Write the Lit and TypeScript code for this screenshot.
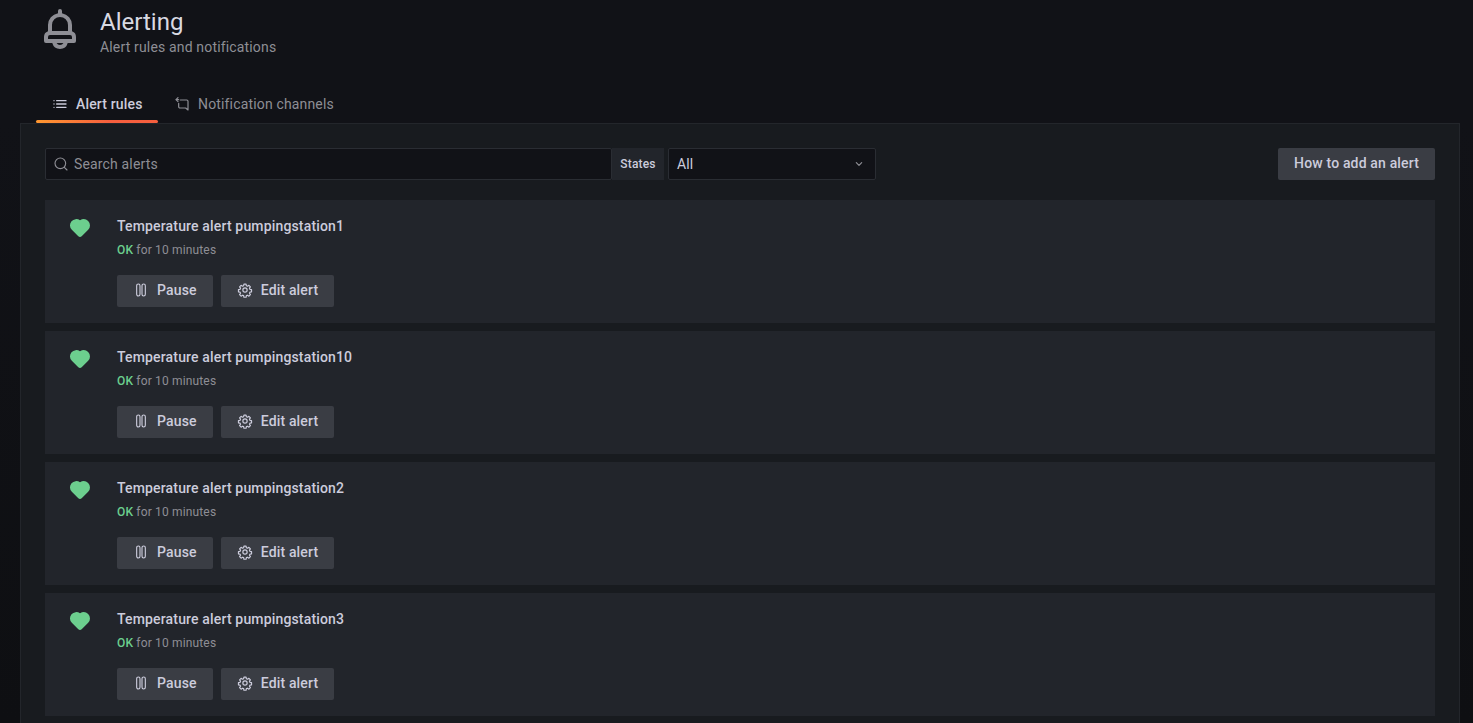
import { LitElement, html, css, svg } from "lit";
import { customElement } from "lit/decorators.js";

const bell = svg`<path fill="currentColor" d="M18,13.18V10a6,6,0,0,0-5-5.91V3a1,1,0,0,0-2,0V4.09A6,6,0,0,0,6,10v3.18A3,3,0,0,0,4,16v2a1,1,0,0,0,1,1H8.14a4,4,0,0,0,7.72,0H19a1,1,0,0,0,1-1V16A3,3,0,0,0,18,13.18ZM8,10a4,4,0,0,1,8,0v3H8Zm4,10a2,2,0,0,1-1.72-1h3.44A2,2,0,0,1,12,20Zm6-3H6V16a1,1,0,0,1,1-1H17a1,1,0,0,1,1,1Z"/>`;
const heart = svg`<path fill="currentColor" d="M20.16 5A6.29 6.29 0 0 0 12 4.36a6.27 6.27 0 0 0-8.16 9.48l6.21 6.22a2.78 2.78 0 0 0 3.9 0l6.21-6.22a6.27 6.27 0 0 0 0-8.84Z"/>`;
const list = svg`<g fill="none" stroke="currentColor" stroke-width="2" stroke-linecap="round"><path d="M7 7h14M7 12h14M7 17h14M3 7h.01M3 12h.01M3 17h.01"/></g>`;
const share = svg`<g fill="none" stroke="currentColor" stroke-width="1.8" stroke-linecap="round" stroke-linejoin="round"><path d="M9.5 6H19a2 2 0 0 1 2 2v13l-3.5-3H9a2 2 0 0 1-2-2v-5"/><path d="M6 2.5 3 5.5l3 3"/><path d="M3.5 5.5H7"/></g>`;
const search = svg`<g fill="none" stroke="currentColor" stroke-width="1.7" stroke-linecap="round"><circle cx="11" cy="11" r="8"/><path d="m17 17 4 4"/></g>`;
const chevron = svg`<path fill="none" stroke="currentColor" stroke-width="1.8" stroke-linecap="round" stroke-linejoin="round" d="m8 10 4 4 4-4"/>`;
const pause = svg`<g fill="none" stroke="currentColor" stroke-width="1.7"><rect x="5.5" y="3" width="5" height="18" rx="2.5"/><rect x="13.5" y="3" width="5" height="18" rx="2.5"/></g>`;
const gear = svg`<g fill="none" stroke="currentColor" stroke-width="1.8" stroke-linejoin="round"><circle cx="12" cy="12" r="3.2"/><path d="M10.4 3.2h3.2l.5 2.5 1.7.7 2.1-1.4 2.2 2.2-1.4 2.1.7 1.7 2.4.5v3.2l-2.4.5-.7 1.7 1.4 2.1-2.2 2.2-2.1-1.4-1.7.7-.5 2.4h-3.2l-.5-2.4-1.7-.7-2.1 1.4-2.2-2.2 1.4-2.1-.7-1.7-2.4-.5v-3.2l2.4-.5.7-1.7-1.4-2.1 2.2-2.2 2.1 1.4 1.7-.7z"/></g>`;

const icon = (cls: string, body: unknown) =>
  html`<svg class=${cls} viewBox="0 0 24 24" aria-hidden="true">${body}</svg>`;

const rules = ["1", "10", "2", "3"].map((n) => `Temperature alert pumpingstation${n}`);

@customElement("app-root")
export class AppRoot extends LitElement {
  static styles = css`
    :host {
      display: block;
      height: 723px;
      overflow: hidden;
      background: linear-gradient(180deg, #111217 0, #111217 120px, #0e0f12 723px);
      font-family: Roboto, "Liberation Sans", sans-serif;
      color: #ccccdc;
      font-size: 14px;
      letter-spacing: 0.16px;
    }
    .header {
      display: flex;
      align-items: flex-start;
      height: 85px;
      padding-left: 36px;
    }
    .bell { width: 48px; height: 48px; color: #8e8e95; margin-top: 5px; flex: none; }
    .titles { margin-left: 16px; padding-top: 7px; }
    h1 { margin: 0; font-size: 24px; font-weight: 400; line-height: 30px; color: #d8d9e2; letter-spacing: 0; }
    .sub { font-size: 14px; line-height: 20px; color: #8e8e95; }
    .tabs { display: flex; height: 38px; margin-left: 36px; }
    .tab {
      display: flex;
      align-items: center;
      gap: 8px;
      padding: 0 16px 1px;
      height: 38px;
      box-sizing: border-box;
      color: #8e8e95;
      position: relative;
      white-space: nowrap;
    }
    .tab.active { color: #ccccdc; font-weight: 500; width: 122px; }
    .tab.active::after {
      content: "";
      position: absolute;
      left: 0; right: 0; bottom: 0;
      height: 3px;
      border-radius: 2px;
      background: linear-gradient(90deg, #ff9830, #f55f3e 60%);
    }
    .tab svg { width: 16px; height: 16px; flex: none; }
    .box {
      margin: 0 13px 0 20px;
      border: 1px solid #23262b;
      border-bottom: none;
      background: #181b1f;
      padding: 24px 24px 0;
      height: 600px;
      box-sizing: border-box;
    }
    .toolbar { display: flex; align-items: stretch; height: 32px; margin-bottom: 20px; }
    .search {
      flex: none;
      width: 567px;
      box-sizing: border-box;
      display: flex;
      align-items: center;
      gap: 5px;
      padding-left: 7px;
      background: #111217;
      border: 1px solid #2a2d33;
      border-radius: 2px;
      color: #8e8e95;
    }
    .search svg { width: 16px; height: 16px; flex: none; }
    .label {
      width: 52px;
      display: flex;
      align-items: center;
      justify-content: center;
      background: #22252b;
      font-size: 12px;
      font-weight: 500;
      color: #ccccdc;
    }
    .select {
      width: 208px;
      margin-left: 4px;
      box-sizing: border-box;
      display: flex;
      align-items: center;
      justify-content: space-between;
      padding: 0 8px;
      background: #111217;
      border: 1px solid #2a2d33;
      border-radius: 2px;
      color: #ccccdc;
    }
    .select svg { width: 16px; height: 16px; color: #8e8e95; }
    .spacer { flex: 1; }
    .btn {
      display: inline-flex;
      align-items: center;
      height: 32px;
      box-sizing: border-box;
      border-radius: 2px;
      background: #3a3d44;
      color: #ccccdc;
      font-weight: 500;
      font-size: 14px;
      padding-bottom: 2px;
    }
    .btn.how { padding-left: 16px; padding-right: 16px; }
    .btn svg { width: 16px; height: 16px; flex: none; }
    .btn.act { padding-left: 16px; padding-right: 16px; gap: 8px; }
    .cards { display: flex; flex-direction: column; gap: 8px; }
    .card {
      display: flex;
      height: 123px;
      box-sizing: border-box;
      background: #22252b;
      padding: 16px 0 0 23px;
    }
    .heart { width: 24px; height: 24px; margin: 0 25px 0 0; color: #6ccf8e; flex: none; }
    .title { font-weight: 500; line-height: 20px; color: #ccccdc; }
    .state { font-size: 12px; line-height: 16px; color: #8e8e95; margin-top: 6px; }
    .ok { color: #6ccf8e; font-weight: 500; }
    .actions { display: flex; gap: 8px; margin-top: 17px; }
  `;

  render() {
    return html`
      <header class="header">
        ${icon("bell", bell)}
        <div class="titles">
          <h1>Alerting</h1>
          <div class="sub">Alert rules and notifications</div>
        </div>
      </header>
      <nav class="tabs">
        <div class="tab active">${icon("", list)}<span>Alert rules</span></div>
        <div class="tab">${icon("", share)}<span>Notification channels</span></div>
      </nav>
      <main class="box">
        <div class="toolbar">
          <div class="search">${icon("", search)}<span>Search alerts</span></div>
          <div class="label">States</div>
          <div class="select"><span>All</span>${icon("", chevron)}</div>
          <div class="spacer"></div>
          <div class="btn how">How to add an alert</div>
        </div>
        <div class="cards">
          ${rules.map(
            (r) => html`
              <section class="card">
                ${icon("heart", heart)}
                <div>
                  <div class="title">${r}</div>
                  <div class="state"><span class="ok">OK</span> for 10 minutes</div>
                  <div class="actions">
                    <div class="btn act">${icon("", pause)}<span>Pause</span></div>
                    <div class="btn act">${icon("", gear)}<span>Edit alert</span></div>
                  </div>
                </div>
              </section>
            `
          )}
        </div>
      </main>
    `;
  }
}
